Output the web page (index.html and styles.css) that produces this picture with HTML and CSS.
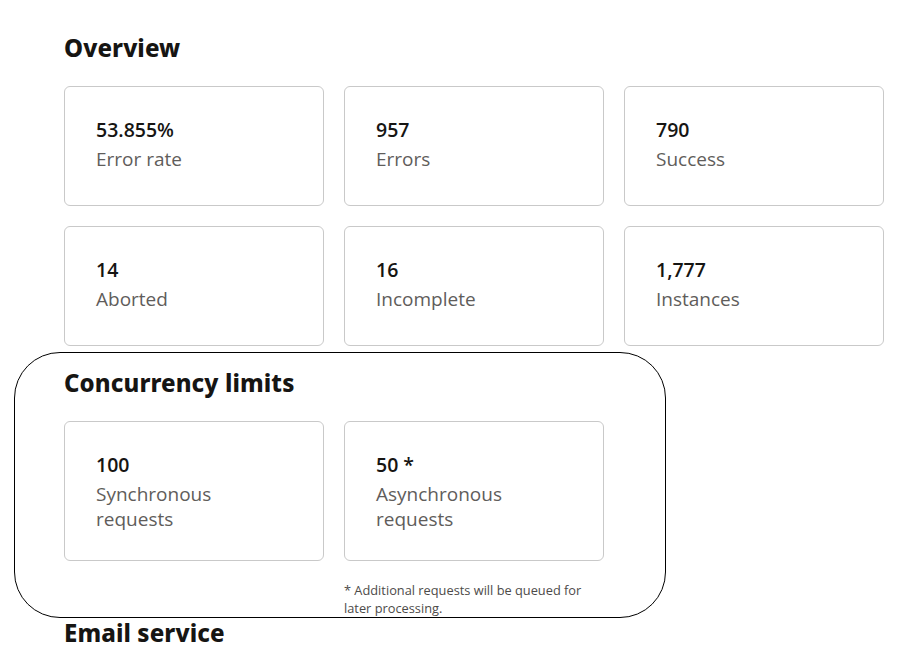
FILE: index.html
```html
<!DOCTYPE html>
<html lang="en">
<head>
<meta charset="utf-8">
<title>Overview</title>
<link rel="stylesheet" href="styles.css">
</head>
<body>
<main class="page">
  <section class="section">
    <h2 class="heading">Overview</h2>
    <div class="grid">
      <div class="card"><div class="value">53.855%</div><div class="label">Error rate</div></div>
      <div class="card"><div class="value">957</div><div class="label">Errors</div></div>
      <div class="card"><div class="value">790</div><div class="label">Success</div></div>
      <div class="card"><div class="value">14</div><div class="label">Aborted</div></div>
      <div class="card"><div class="value">16</div><div class="label">Incomplete</div></div>
      <div class="card"><div class="value">1,777</div><div class="label">Instances</div></div>
    </div>
  </section>
  <section class="section concurrency">
    <div class="outline"></div>
    <h2 class="heading">Concurrency limits</h2>
    <div class="grid">
      <div class="card tall"><div class="value">100</div><div class="label">Synchronous requests</div></div>
      <div class="card tall"><div class="value">50 *</div><div class="label">Asynchronous requests</div></div>
    </div>
    <div class="grid">
      <p class="footnote">* Additional requests will be queued for later processing.</p>
    </div>
  </section>
  <section class="section email">
    <h2 class="heading">Email service</h2>
  </section>
</main>
</body>
</html>
```
FILE: styles.css
```css
html, body {
  margin: 0;
  padding: 0;
  background: #ffffff;
}
body {
  font-family: "Open Sans", "Liberation Sans", sans-serif;
  color: #161513;
}
.page {
  padding: 32px 0 0 64px;
}
.section {
  position: relative;
}
.heading {
  margin: 0 0 22px 0;
  font-family: "Noto Sans", "Liberation Sans", sans-serif;
  font-weight: 800;
  font-size: 24px;
  line-height: 32px;
  letter-spacing: 0.1px;
  color: #161513;
}
.grid {
  display: grid;
  grid-template-columns: repeat(3, 260px);
  gap: 20px;
}
.card {
  box-sizing: border-box;
  height: 120px;
  border: 1px solid #c9c9c9;
  border-radius: 6px;
  padding: 29px 31px 0 31px;
}
.card.tall {
  height: 140px;
}
.value {
  font-size: 19.5px;
  line-height: 28px;
  font-weight: 600;
  color: #161513;
}
.label {
  font-size: 19px;
  line-height: 25px;
  margin-top: 3px;
  color: #5f5d5b;
}
.section + .section {
  margin-top: 21px;
}
.section.email {
  margin-top: 0;
}
.concurrency .grid + .grid {
  margin-top: 20px;
}
.footnote {
  grid-column: 2;
  margin: 0;
  font-size: 12.8px;
  line-height: 18px;
  color: #4d4b49;
  max-width: 245px;
}
.outline {
  position: absolute;
  left: -50px;
  top: -15px;
  width: 650px;
  height: 264px;
  border: 1px solid #000;
  border-radius: 46px;
  pointer-events: none;
}
```
